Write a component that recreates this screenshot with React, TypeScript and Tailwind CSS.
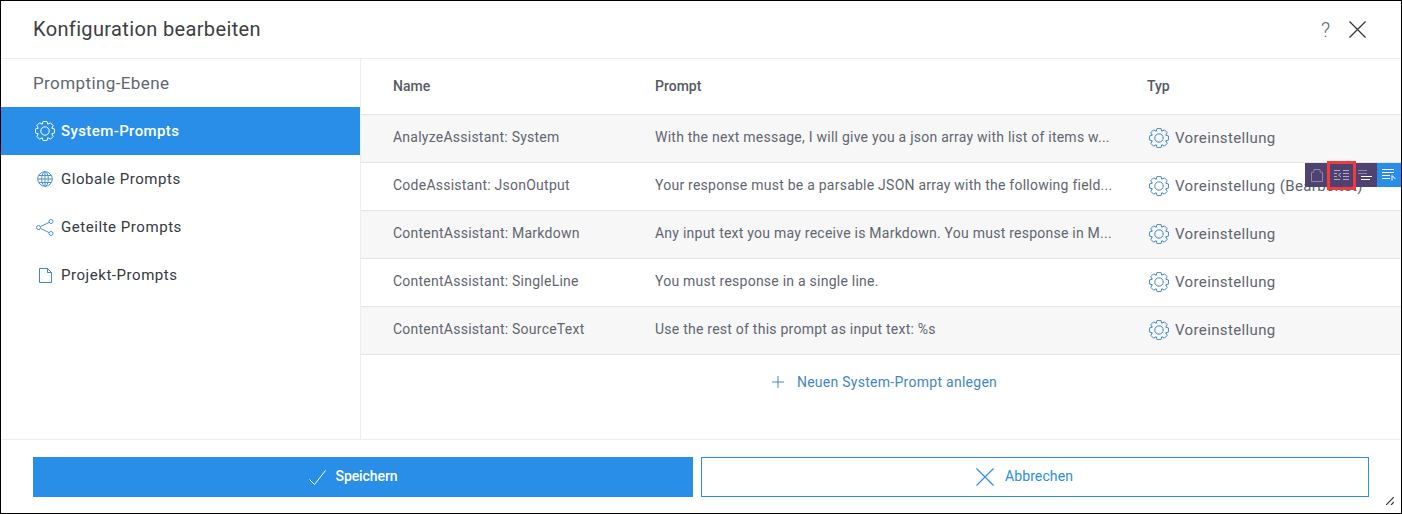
import React from 'react';

const font = { fontFamily: 'Roboto, sans-serif' };

// 8-zackiges Zahnrad als Polygon
const gearPath = (() => {
  const pts: string[] = [];
  for (let i = 0; i < 8; i++) {
    const a = (i * Math.PI) / 4 - Math.PI / 2;
    [[-0.2, 9.800], [0.2, 9.800], [0.39, 7.300]].forEach(([off, r]) => {
      pts.push(`${(10 + r * Math.cos(a + off)).toFixed(2)} ${(10 + r * Math.sin(a + off)).toFixed(2)}`);
    });
  }
  return 'M' + pts.join('L') + 'Z';
})();

const Gear = ({ className }: { className?: string }) => (
  <svg viewBox="0 0 20 20" fill="none" stroke="currentColor" strokeWidth="1" strokeLinejoin="round" className={className}>
    <path d={gearPath} />
    <circle cx="10" cy="10" r="4.200" />
  </svg>
);

const rows = [
  { name: 'AnalyzeAssistant: System', prompt: 'With the next message, I will give you a json array with list of items w...', typ: 'Voreinstellung' },
  { name: 'CodeAssistant: JsonOutput', prompt: 'Your response must be a parsable JSON array with the following field...', typ: 'Voreinstellung (Bearbeitet)' },
  { name: 'ContentAssistant: Markdown', prompt: 'Any input text you may receive is Markdown. You must response in M...', typ: 'Voreinstellung' },
  { name: 'ContentAssistant: SingleLine', prompt: 'You must response in a single line.', typ: 'Voreinstellung' },
  { name: 'ContentAssistant: SourceText', prompt: 'Use the rest of this prompt as input text: %s', typ: 'Voreinstellung' },
];

const RowToolbar = () => (
  <div className="absolute right-0 top-[162px] flex h-6 w-[96px] bg-[#4e4270]">
    <div className="flex w-[24px] items-center justify-center text-[#8f87a8]">
      <svg viewBox="0 0 12 13" fill="none" stroke="currentColor" strokeWidth="1" className="h-[13px] w-[12px]">
        <path d="M.5 12.500V3.500L3 2.800V.5h6v2.300l2.500.7v9z" />
      </svg>
    </div>
    <div className="relative flex w-[24px] items-center justify-center text-[#b1abc6]">
      <svg viewBox="0 0 15 11" fill="none" stroke="currentColor" strokeWidth="1" className="h-[11px] w-[15px]">
        <path d="M0 .5h6M0 3.500h3M0 6.500h3M0 9.500h6M9 .5h6M9 3.500h6M9 6.500h6M9 9.500h6M7 3L4.500 5 7 7" />
      </svg>
      <div className="absolute -left-[2px] -right-[3px] -top-[2px] -bottom-[3px] border-[3px] border-[#f23b3f]" />
    </div>
    <div className="flex w-[24px] items-center justify-center">
      <svg viewBox="0 0 14 11" fill="none" strokeWidth="1" className="h-[11px] w-[14px]">
        <path d="M0 .5h9M0 3.500h9" stroke="#8f87a8" />
        <path d="M3 6.500h11M3 9.500h9" stroke="#ffffff" />
      </svg>
    </div>
    <div className="flex w-[24px] items-center justify-center bg-[#288ee8] text-white">
      <svg viewBox="0 0 14 12" fill="none" stroke="currentColor" strokeWidth="1" className="h-[12px] w-[14px]">
        <path d="M0 .5h12M0 3.500h12M0 6.500h8M0 9.500h8M10 11.500V6.500l3.500 3.500" />
      </svg>
    </div>
  </div>
);

export default function App() {
  return (
    <div style={font} className="relative flex h-[514px] w-[1402px] flex-col overflow-hidden border border-black bg-white">
      {/* Kopfzeile */}
      <div className="flex h-[58px] flex-none items-center border-b border-[#eeeeee] pl-[32px] pr-[35px]">
        <h1 className="mb-[2px] flex-1 text-[20px] tracking-[0.36px] text-[#3c4043]">Konfiguration bearbeiten</h1>
        <span className="mr-[19px] text-[20px] font-light text-[#5f6670]">?</span>
        <svg viewBox="0 0 17 17" stroke="currentColor" strokeWidth="1.200" className="h-[17px] w-[17px] text-[#333]">
          <path d="M.5.5l16 16M16.500.5l-16 16" />
        </svg>
      </div>

      <div className="flex min-h-0 flex-1">
        {/* Seitenleiste */}
        <div className="w-[360px] flex-none border-r border-[#eeeeee]">
          <div className="flex h-[48px] items-center pl-[32px] pt-[1px] text-[17px] tracking-[0.4px] text-[#5f6670]">Prompting-Ebene</div>
          <div className="flex h-[48px] items-center bg-[#288ee8] pl-[34px] text-[15px] font-medium tracking-[0.4px] text-white">
            <Gear className="mr-[6px] h-[20px] w-[20px]" />
            System-Prompts
          </div>
          <div className="flex h-[48px] items-center pl-[36px] text-[15px] tracking-[0.55px] text-[#333a40]">
            <svg viewBox="0 0 16 16" fill="none" stroke="currentColor" strokeWidth="1" className="mr-[8px] h-[16px] w-[16px] text-[#4b93d1]">
              <circle cx="8" cy="8" r="7.300" />
              <ellipse cx="8" cy="8" rx="3.300" ry="7.300" />
              <path d="M8 .7v14.600M.7 8h14.600M1.800 4.500h12.400M1.800 11.500h12.400" />
            </svg>
            Globale Prompts
          </div>
          <div className="flex h-[48px] items-center pl-[35px] text-[15px] tracking-[0.55px] text-[#333a40]">
            <svg viewBox="0 0 18 17" fill="none" stroke="currentColor" strokeWidth="1" className="mr-[7px] h-[17px] w-[18px] text-[#4b93d1]">
              <circle cx="2.500" cy="8.500" r="2" />
              <circle cx="15" cy="2.500" r="2" />
              <circle cx="15" cy="14.500" r="2" />
              <path d="M4.400 7.600L13.200 3.400M4.400 9.400l8.800 4.200" />
            </svg>
            Geteilte Prompts
          </div>
          <div className="flex h-[48px] items-center pl-[38px] text-[15px] tracking-[0.55px] text-[#333a40]">
            <svg viewBox="0 0 13 15" fill="none" stroke="#3f87c7" strokeWidth="1" className="mr-[9px] h-[15px] w-[13px]">
              <path d="M.5.5h8l4 4v10H.5zM8.500.5v4h4" />
            </svg>
            Projekt-Prompts
          </div>
        </div>

        {/* Tabelle */}
        <div className="min-w-0 flex-1">
          <div className="flex h-[56px] items-center border-b border-[#e5e5e5] pl-[32px] text-[14px] font-medium text-[#555b63]">
            <div className="w-[262px]">Name</div>
            <div className="w-[492px]">Prompt</div>
            <div>Typ</div>
          </div>
          {rows.map((row, i) => (
            <div key={row.name} className={`flex h-[48px] items-center border-b border-[#e5e5e5] pl-[32px] text-[14px] tracking-[0.24px] text-[#5f6670] ${i % 2 === 0 ? 'bg-[#f7f7f7]' : 'bg-white'}`}>
              <div className="mb-[2px] w-[262px] truncate">{row.name}</div>
              <div className="mb-[2px] w-[492px] truncate">{row.prompt}</div>
              <div className="flex items-center whitespace-nowrap pl-[2px] text-[15px] tracking-[0.37px]">
                <Gear className="mb-[1px] mr-[6px] h-[20px] w-[20px] text-[#3f87c7]" />
                {row.typ}
              </div>
            </div>
          ))}
          <div className="flex h-[54px] items-center justify-center pl-[7px] text-[14px] tracking-[0.27px] text-[#3f87c7]">
            <svg viewBox="0 0 12 12" stroke="currentColor" strokeWidth="1" className="mr-[13px] h-[12px] w-[12px]">
              <path d="M6 0v12M0 6h12" />
            </svg>
            Neuen System-Prompt anlegen
          </div>
        </div>
      </div>

      {/* Fußzeile */}
      <div className="flex h-[74px] flex-none gap-[8px] border-t border-[#eeeeee] pb-[16px] pl-[32px] pr-[32px] pt-[17px]">
        <button className="flex w-[660px] items-center justify-center bg-[#288ee8] pr-[20px] text-[14px] font-medium tracking-[-0.1px] text-white">
          <svg viewBox="0 0 17 15" fill="none" stroke="currentColor" strokeWidth="1" className="mr-[10px] h-[15px] w-[17px]">
            <path d="M.5 9.500l5 5L16.500.5" />
          </svg>
          <span className="mb-[2px]">Speichern</span>
        </button>
        <button className="flex flex-1 items-center justify-center border border-[#288ee8] pr-[21px] text-[14px] tracking-[0.1px] text-[#288ee8]">
          <svg viewBox="0 0 18 18" stroke="currentColor" strokeWidth="1.100" className="mr-[11px] h-[18px] w-[18px]">
            <path d="M.5.5l17 17M17.500.5l-17 17" />
          </svg>
          <span className="mb-[2px]">Abbrechen</span>
        </button>
      </div>

      <RowToolbar />

      <svg viewBox="0 0 8 8" stroke="#333" strokeWidth="1.200" className="absolute bottom-[8px] right-[7px] h-[8px] w-[8px]">
        <path d="M0 8l8-8M5 8l3-3" />
      </svg>
    </div>
  );
}
